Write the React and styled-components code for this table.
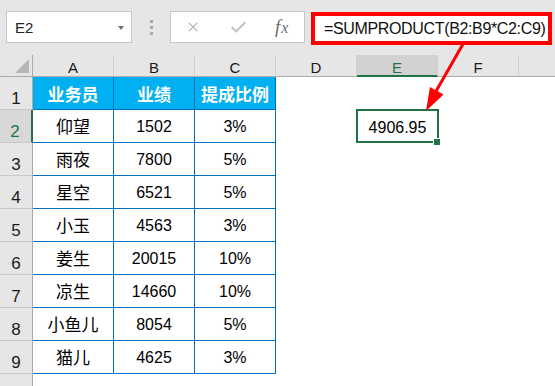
import styled, { createGlobalStyle } from "styled-components";
import { X, Check } from "lucide-react";

const GlobalStyle = createGlobalStyle`
  * { box-sizing: border-box; }
  html, body, #root { margin: 0; height: 100%; }
  body {
    font-family: "Liberation Sans", "Noto Sans CJK SC", sans-serif;
    background: #fff;
  }
`;

const headers = ["业务员", "业绩", "提成比例"];
const rows = [
  ["仰望", 1502, "3%"],
  ["雨夜", 7800, "5%"],
  ["星空", 6521, "5%"],
  ["小玉", 4563, "3%"],
  ["姜生", 20015, "10%"],
  ["凉生", 14660, "10%"],
  ["小鱼儿", 8054, "5%"],
  ["猫儿", 4625, "3%"],
];
const columns = ["A", "B", "C", "D", "E", "F", ""];

export default function App() {
  return (
    <Page>
      <GlobalStyle />
      <TopBar>
        <NameBox>
          E2
          <Caret />
        </NameBox>
        <Grip>
          <span />
          <span />
          <span />
        </Grip>
        <FxBox>
          <X size={16} strokeWidth={1.6} color="#b9b9b9" />
          <Check size={19} strokeWidth={2.6} color="#c2c2c2" />
          <Fx>
            f<i>x</i>
          </Fx>
        </FxBox>
        <FormulaBox>=SUMPRODUCT(B2:B9*C2:C9)</FormulaBox>
      </TopBar>

      <Sheet>
        <Corner>
          <Triangle />
        </Corner>
        {columns.map((c, i) => (
          <ColHead key={i} $active={c === "E"} $last={c === ""}>
            {c}
          </ColHead>
        ))}

        <RowHead>1</RowHead>
        {headers.map((h) => (
          <HeadCell key={h}>{h}</HeadCell>
        ))}
        <Blank $span />

        {rows.map((r, i) => (
          <Row key={i} index={i + 2} data={r} />
        ))}

        <RowHead $filler />
        <Blank $span />
      </Sheet>

      <Arrow viewBox="0 0 555 386">
        <line x1="463" y1="44" x2="435" y2="93" stroke="#ff0000" strokeWidth="3" />
        <polygon points="426,111 430,87 443.5,94.5" fill="#ff0000" />
      </Arrow>
    </Page>
  );
}

function Row({ index, data }) {
  const active = index === 2;
  return (
    <>
      <RowHead $active={active}>{index}</RowHead>
      <NameCell>{data[0]}</NameCell>
      <Cell>{data[1]}</Cell>
      <Cell>{data[2]}</Cell>
      <Blank />
      {active ? <ActiveCell>4906.95</ActiveCell> : <Blank />}
      <Blank $wide />
    </>
  );
}

const Page = styled.div`
  position: relative;
  height: 100vh;
  display: flex;
  flex-direction: column;
  overflow: hidden;
`;

const TopBar = styled.div`
  height: 55px;
  flex: none;
  background: #e6e6e6;
  display: flex;
  align-items: flex-start;
  padding: 11px 0 0 6px;
`;

const NameBox = styled.div`
  width: 126px;
  height: 32px;
  background: #fff;
  border: 1px solid #c6c6c6;
  display: flex;
  align-items: center;
  justify-content: space-between;
  padding: 1px 7px 0 8px;
  font-size: 15px;
  color: #222;
`;

const Caret = styled.span`
  width: 0;
  height: 0;
  border-left: 3px solid transparent;
  border-right: 3px solid transparent;
  border-top: 4px solid #707070;
`;

const Grip = styled.div`
  display: flex;
  flex-direction: column;
  gap: 3px;
  margin: 9px 17px 0 18px;

  span {
    width: 3px;
    height: 3px;
    background: #a9a9a9;
  }
`;

const FxBox = styled.div`
  width: 135px;
  height: 32px;
  background: #fff;
  border: 1px solid #c6c6c6;
  display: flex;
  align-items: center;
  gap: 28px;
  padding-left: 14px;
`;

const Fx = styled.span`
  font-family: "Liberation Serif", serif;
  font-style: italic;
  font-size: 19px;
  color: #6e6e6e;
  margin-left: -1px;

  i {
    font-size: 16px;
    margin-left: 1px;
  }
`;

const FormulaBox = styled.div`
  width: 241px;
  height: 33px;
  margin: 1px 0 0 6px;
  border: 4px solid #ff0000;
  background: #fff;
  display: flex;
  align-items: center;
  padding: 1px 0 0 9px;
  font-size: 16px;
  letter-spacing: -0.35px;
  color: #111;
  white-space: nowrap;
`;

const Sheet = styled.div`
  flex: 1;
  display: grid;
  grid-template-columns: 33px repeat(6, 81px) 1fr;
  grid-template-rows: 22px repeat(9, 33px) 1fr;
  background: #fff;
`;

const Corner = styled.div`
  background: #e6e6e6;
  border-right: 1px solid #ababab;
  border-bottom: 1px solid #ababab;
  display: flex;
  align-items: flex-end;
  justify-content: flex-end;
  padding: 0 3px 3px 0;
`;

const Triangle = styled.div`
  width: 14px;
  height: 14px;
  background: #b5b5b5;
  clip-path: polygon(100% 0, 100% 100%, 0 100%);
`;

const ColHead = styled.div`
  background: ${(p) => (p.$active ? "#d2d2d2" : "#e6e6e6")};
  color: ${(p) => (p.$active ? "#217346" : "#1a1a1a")};
  border-right: ${(p) => (p.$last ? "none" : "1px solid #cfcfcf")};
  border-bottom: ${(p) =>
    p.$active ? "2px solid #217346" : "1px solid #ababab"};
  display: flex;
  align-items: center;
  justify-content: center;
  padding-top: ${(p) => (p.$active ? "5px" : "4px")};
  font-size: 15px;
`;

const RowHead = styled.div`
  background: ${(p) => (p.$active ? "#d8d8d8" : "#e6e6e6")};
  color: ${(p) => (p.$active ? "#217346" : "#1a1a1a")};
  border-right: ${(p) =>
    p.$active ? "2px solid #217346" : "1px solid #ababab"};
  border-bottom: ${(p) => (p.$filler ? "none" : "1px solid #c8c8c8")};
  display: flex;
  align-items: flex-end;
  justify-content: center;
  padding: 0 ${(p) => (p.$active ? "1px" : "0")} 2px 0;
  font-size: 17px;
  line-height: 17px;
`;

const Cell = styled.div`
  display: flex;
  align-items: center;
  justify-content: center;
  padding-top: 2px;
  border-right: 1px solid #0070c0;
  border-bottom: 1px solid #0070c0;
  font-size: 16px;
  line-height: 16px;
  color: #000;
`;

const NameCell = styled(Cell)`
  font-size: 17px;
  line-height: 17px;
`;

const HeadCell = styled(Cell)`
  background: #00b0f0;
  color: #fff;
  font-weight: 700;
  font-size: 17px;
  line-height: 17px;
  padding-top: 4px;
`;

const Blank = styled.div`
  background: #fff;
  grid-column: ${(p) => (p.$span ? "5 / -1" : p.$wide ? "7 / -1" : "auto")};
`;

const ActiveCell = styled.div`
  position: relative;
  display: flex;
  align-items: center;
  justify-content: center;
  padding-top: 2px;
  font-size: 16px;
  line-height: 16px;
  color: #000;

  &::before {
    content: "";
    position: absolute;
    inset: -1px -1px 0 -1px;
    border: 2px solid #217346;
  }

  &::after {
    content: "";
    position: absolute;
    right: -3px;
    bottom: -3px;
    width: 6px;
    height: 6px;
    background: #217346;
    border: 1px solid #fff;
  }
`;

const Arrow = styled.svg`
  position: absolute;
  inset: 0;
  width: 555px;
  height: 386px;
  pointer-events: none;
`;
